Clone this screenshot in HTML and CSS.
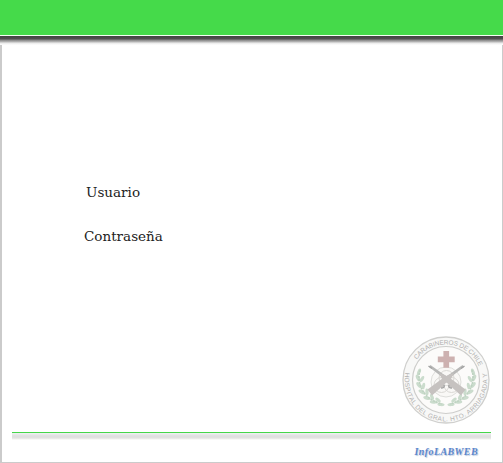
FILE: index.html
```html
<!DOCTYPE html>
<html lang="es">
<head>
<meta charset="utf-8">
<title>InfoLABWEB</title>
<link rel="stylesheet" href="styles.css">
</head>
<body>
<main class="window">
  <header class="banner"></header>
  <section class="login">
    <p class="label user">Usuario</p>
    <p class="label password">Contraseña</p>
  </section>
  <div class="crest">
    <svg class="seal" viewBox="-45 -45 90 90">
      <defs>
        <path id="top-arc" d="M-29.2-20.3A35.6 35.6 0 0 1 34-10.5"/>
        <path id="bottom-arc" d="M-40.6-7.5A41.3 41.3 0 1 0 40.2-9.5"/>
        <g id="laurel" fill="#cbdccd">
          <ellipse cx="-27" cy="-8" rx="1.7" ry="3.6" transform="rotate(20 -27 -8)"/>
          <ellipse cx="-28" cy="-2" rx="1.8" ry="3.6" transform="rotate(-25 -28 -2)"/>
          <ellipse cx="-24" cy="-1" rx="1.6" ry="3.4" transform="rotate(30 -24 -1)"/>
          <ellipse cx="-27" cy="5" rx="1.8" ry="3.6" transform="rotate(-40 -27 5)"/>
          <ellipse cx="-22.5" cy="6" rx="1.6" ry="3.4" transform="rotate(10 -22.5 6)"/>
          <ellipse cx="-24" cy="12" rx="1.8" ry="3.8" transform="rotate(-60 -24 12)"/>
          <ellipse cx="-19" cy="12" rx="1.6" ry="3.4" transform="rotate(-5 -19 12)"/>
          <ellipse cx="-19" cy="18" rx="1.8" ry="3.8" transform="rotate(-75 -19 18)"/>
          <ellipse cx="-14" cy="17" rx="1.6" ry="3.2" transform="rotate(-25 -14 17)"/>
          <ellipse cx="-12.5" cy="22" rx="1.7" ry="3.8" transform="rotate(-85 -12.5 22)"/>
          <ellipse cx="-8" cy="20" rx="1.5" ry="3.2" transform="rotate(-50 -8 20)"/>
          <ellipse cx="-5" cy="24.5" rx="1.6" ry="3.6" transform="rotate(-85 -5 24.5)"/>
          <path d="M-26-10C-30 4-22 20-4 24" fill="none" stroke="#bdd2c0" stroke-width="1.5" stroke-dasharray="2 1"/>
        </g>
        <g id="rifle">
          <path d="M-17-13 2 1.5l2-2.5L-15.5-15z" fill="#b8b8b7"/>
          <path d="M-7-7-1-5 6-.5 19.5 9.5 15 15.5 6 7.5C4 8 3 6 3 4.500L-4-1z" fill="#c6c2c0"/>
          <path d="M-17.500-14-14-11.500M3 5q-1 3 3 3" fill="none" stroke="#a3a3a3" stroke-width="1.5"/>
        </g>
      </defs>
      <circle r="43" fill="#f8f8f7" stroke="#cfcfcd" stroke-width="1.3"/>
      <circle r="33.5" fill="#fcfbfa" stroke="#cdcdcb" stroke-width="1.2"/>
      <use href="#laurel"/>
      <use href="#laurel" transform="scale(-1 1)"/>
      <circle cy="2" r="15" fill="#f9f8f6" stroke="#dededb"/>
      <g fill="none" stroke="#dad8d5">
        <circle cx="-4.500" cy="5" r="7.500"/>
        <circle cx="5.500" cy="5" r="7.500"/>
        <circle cx=".5" cy="-2" r="7.500"/>
      </g>
      <use href="#rifle"/>
      <use href="#rifle" transform="translate(1 0) scale(-1 1)"/>
      <path d="M-2.6-29h5.7v5.5h5.6v5.7H3.100v5.6h-5.700v-5.6h-5.600v-5.700h5.600z" fill="#cdb1b0"/>
      <text class="ring-text"><textPath href="#top-arc" textLength="76">CARABINEROS DE CHILE</textPath></text>
      <text class="ring-text"><textPath href="#bottom-arc" textLength="144">HOSPITAL DEL GRAL. HTO. ARRIAGADA Y</textPath></text>
    </svg>
  </div>
  <footer class="footer">
    <div class="rule"></div>
    <p class="brand">InfoLABWEB</p>
  </footer>
</main>
</body>
</html>
```
FILE: styles.css
```css
* { box-sizing: border-box; }
body { margin: 0; background: #fff; overflow: hidden; }
p { margin: 0; }

.window {
  width: 503px;
  height: 463px;
  display: flex;
  flex-direction: column;
  border: solid #cbcbcb;
  border-width: 0 1px 1px 2px;
}

.banner {
  flex: 0 0 45px;
  margin: 0 -1px 0 -2px;
  background: linear-gradient(#45da4a 35px, #f4fff4 35px 36px, #424242 36px, #505050 39px, #858585 40px, #bcbcbc 42px, #e9e9e9 43px, #fff 45px);
}

.login {
  height: 290px;
  padding: 138px 0 0 82px;
}

.label {
  font: 13px/20px "DejaVu Serif", serif;
  color: #222;
  white-space: nowrap;
  width: max-content;
  transform-origin: 0 50%;
}
.user { margin-left: 2px; transform: scaleX(1.04); }
.password { margin-top: 24px; transform: scaleX(1.04); }

.crest {
  display: flex;
  justify-content: flex-end;
  padding-right: 11px;
  height: 90px;
}
.seal { width: 90px; height: 90px; }

.ring-text {
  font: 6.5px "Liberation Sans", sans-serif;
  fill: #b2b1b0;
}

.footer { padding: 7px 11px 0 10px; }
.rule {
  height: 8px;
  background: linear-gradient(#45d64a 1px, #f1f1f3 1px, #dededf 4px, #e2e2e0 6px, #fff 8px);
}
.brand {
  margin: 5px 13px 0 0;
  text-align: right;
  font: italic bold 10px/14px "Liberation Serif", serif;
  letter-spacing: .4px;
  color: #5b86cb;
  text-shadow: 1px 1px 1px #b9c8df;
}
```
